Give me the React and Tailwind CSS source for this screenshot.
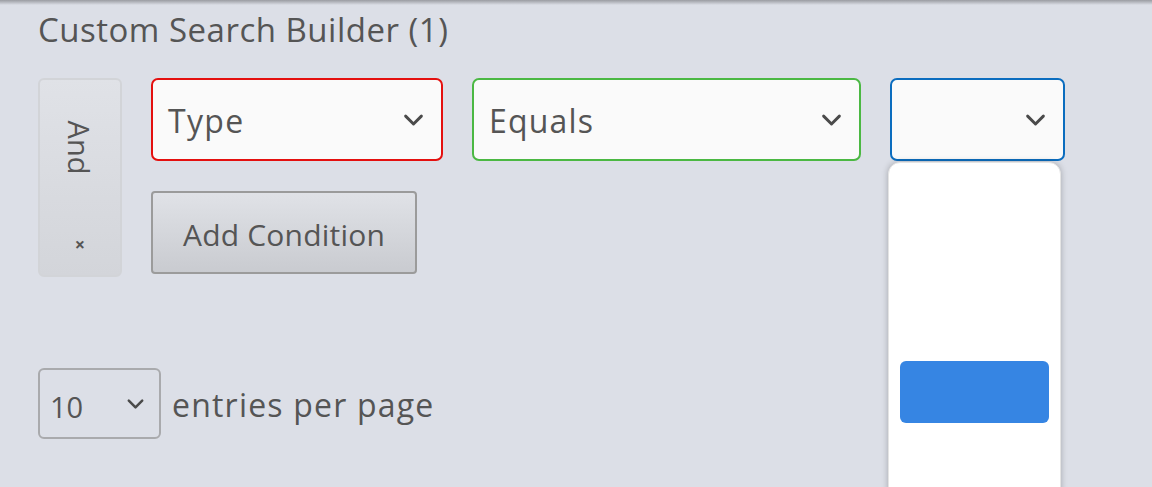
import React from "react";

const Chevron = ({ className = "" }) => (
  <svg className={className} viewBox="0 0 24 24" fill="none" stroke="#4a4a4a" strokeWidth="2.6" strokeLinecap="round" strokeLinejoin="round">
    <path d="M5 9l7 7 7-7" />
  </svg>
);

export default function App() {
  return (
    <div className="relative w-[1152px] h-[487px] overflow-hidden bg-[#dcdfe7] text-[#555555]" style={{ fontFamily: "'Open Sans', Lato, sans-serif" }}>
      <div className="h-[5px] bg-gradient-to-b from-[#9a9ca2] to-[#dcdfe7]" />
      <div className="pl-[38px]">
        <div className="text-[33px] leading-[36px] mt-[7px] tracking-[0.5px] whitespace-nowrap">Custom Search Builder (1)</div>
        <div className="flex mt-[30px]">
          <div className="w-[84px] h-[199px] rounded-[6px] border-2 border-[#d2d4d8] bg-gradient-to-b from-[#e0e2e7] to-[#d3d5da] flex flex-col items-center justify-between pt-[38px] pb-[22px]">
            <span className="text-[29px] leading-none rotate-90 inline-block mt-[15px]">And</span>
            <span className="text-[18px] leading-none font-bold">×</span>
          </div>
          <div className="ml-[29px] flex flex-col">
            <div className="flex gap-[29px]">
              <div className="w-[292px] h-[83px] rounded-[7px] border-2 border-[#e4100f] bg-[#fafafa] flex items-center justify-between pl-[15px] pr-[14px]">
                <span className="text-[32px] mt-[2px] tracking-[1.3px]">Type</span>
                <Chevron className="w-[27px] h-[27px]" />
              </div>
              <div className="w-[389px] h-[83px] rounded-[7px] border-2 border-[#4bb843] bg-[#fafafa] flex items-center justify-between pl-[15px] pr-[14px]">
                <span className="text-[32px] mt-[2px] tracking-[1.2px]">Equals</span>
                <Chevron className="w-[27px] h-[27px]" />
              </div>
              <div className="relative w-[175px] h-[83px]">
                <div className="w-full h-full rounded-[7px] border-2 border-[#0b6dbf] bg-[#fafafa] flex items-center justify-end pr-[14px]">
                  <Chevron className="w-[27px] h-[27px]" />
                </div>
                <div className="absolute left-[-2px] top-[84px] w-[173px] h-[340px] rounded-[12px] bg-white border border-[#e4e4e4] shadow-[0_0_6px_rgba(0,0,0,0.25)] z-10">
                  <div className="mt-[198px] mx-[11px] h-[62px] rounded-[6px] bg-[#3685e3]" />
                </div>
              </div>
            </div>
            <div className="mt-[30px] w-[266px] h-[83px] rounded-[4px] border-2 border-[#9b9b9b] bg-gradient-to-b from-[#e0e2e7] to-[#c9cbd0] flex items-center justify-center">
              <span className="text-[30px] mt-[3px] tracking-[0.2px]">Add Condition</span>
            </div>
          </div>
        </div>
        <div className="flex items-center mt-[91px]">
          <div className="w-[123px] h-[71px] rounded-[6px] border-2 border-[#a9aaad] flex items-center justify-between pl-[10px] pr-[12px]">
            <span className="text-[29px] mt-[6px]">10</span>
            <Chevron className="w-[23px] h-[23px]" />
          </div>
          <span className="ml-[11px] text-[32px] mt-[2px] tracking-[1.2px]">entries per page</span>
        </div>
      </div>
    </div>
  );
}
